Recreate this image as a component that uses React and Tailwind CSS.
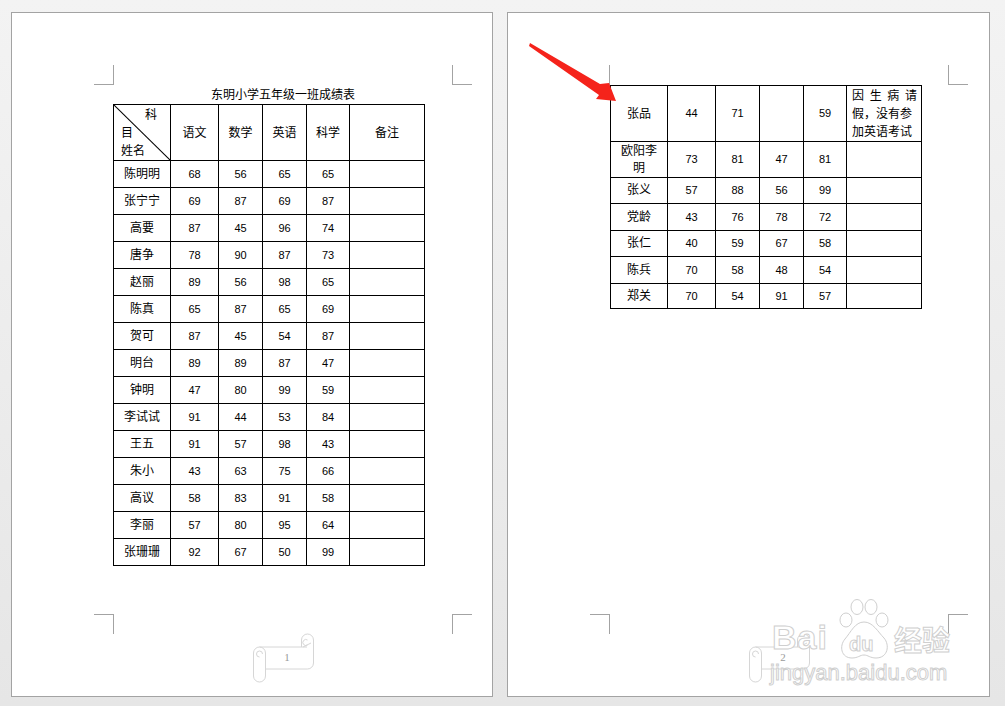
const FONT = "font-['Liberation_Sans','Noto_Sans_CJK_SC',sans-serif]"

const page1 = [
  ['陈明明', 68, 56, 65, 65],
  ['张宁宁', 69, 87, 69, 87],
  ['高要', 87, 45, 96, 74],
  ['唐争', 78, 90, 87, 73],
  ['赵丽', 89, 56, 98, 65],
  ['陈真', 65, 87, 65, 69],
  ['贺可', 87, 45, 54, 87],
  ['明台', 89, 89, 87, 47],
  ['钟明', 47, 80, 99, 59],
  ['李试试', 91, 44, 53, 84],
  ['王五', 91, 57, 98, 43],
  ['朱小', 43, 63, 75, 66],
  ['高议', 58, 83, 91, 58],
  ['李丽', 57, 80, 95, 64],
  ['张珊珊', 92, 67, 50, 99],
]

const page2 = [
  ['欧阳李明', 73, 81, 47, 81, 'h-[36px]'],
  ['张义', 57, 88, 56, 99, 'h-[26px]'],
  ['党龄', 43, 76, 78, 72, 'h-[27px]'],
  ['张仁', 40, 59, 67, 58, 'h-[26px]'],
  ['陈兵', 70, 58, 48, 54, 'h-[27px]'],
  ['郑关', 70, 54, 91, 57, 'h-[25px]'],
]

function CropMarks() {
  const c = 'absolute w-[20px] h-[20px] border-[#a3a3a3]'
  return (
    <>
      <div className={`${c} left-[82px] top-[52px] border-r border-b`} />
      <div className={`${c} left-[440px] top-[52px] border-l border-b`} />
      <div className={`${c} left-[82px] top-[601px] border-r border-t`} />
      <div className={`${c} left-[440px] top-[601px] border-l border-t`} />
    </>
  )
}

function PageNo({ n }) {
  return (
    <div className="absolute left-[241px] top-[620px] w-[62px] h-[50px]">
      <svg width="62" height="50" viewBox="0 0 62 50" fill="none" stroke="#d6d6d6" strokeWidth="1">
        <path d="M0.5 20 a6 6 0 0 1 12 0 V43 a6 6 0 0 1 -12 0 Z" />
        <path d="M6.5 24 a3 3 0 1 1 3 -3" />
        <path d="M6.5 14 H54" />
        <path d="M48.5 14 V7 a6 6 0 0 1 12 0 V30 a6 6 0 0 1 -6 6 H12.5" />
        <path d="M54.5 12 a3 3 0 1 1 0 -5" />
        <path d="M50 14 L58 10" />
      </svg>
      <div className="absolute left-[29px] top-[17px] w-[10px] text-center text-[11px] leading-[14px] text-[#9a9a9a] font-['Liberation_Serif',serif]">
        {n}
      </div>
    </div>
  )
}

function Td({ children, className = '' }) {
  return <td className={`border border-black text-center align-middle p-0 ${className}`}>{children}</td>
}

function Cols() {
  return (
    <colgroup>
      <col className="w-[57px]" />
      <col className="w-[48px]" />
      <col className="w-[44px]" />
      <col className="w-[44px]" />
      <col className="w-[43px]" />
      <col className="w-[75px]" />
    </colgroup>
  )
}

function LeftPage() {
  return (
    <div className="relative w-[482px] h-[685px] bg-white border border-[#a3a3a3] shrink-0">
      <CropMarks />
      <div className="ml-[102px] mt-[73px] w-[338px]">
        <div className="text-center text-[12px] leading-[18px] text-black">东明小学五年级一班成绩表</div>
        <table className="-ml-px w-[312px] table-fixed border-collapse text-black">
          <Cols />
          <tbody>
            <tr className="h-[55px] text-[12px]">
              <td className="relative border border-black p-0 align-top">
                <svg className="absolute inset-0 w-full h-full" preserveAspectRatio="none" viewBox="0 0 56 54">
                  <line x1="0" y1="0" x2="56" y2="54" stroke="black" strokeWidth="1" />
                </svg>
                <div className="relative leading-[18px] pt-px">
                  <div className="text-right pr-[13px]">科</div>
                  <div className="pl-[7px]">目</div>
                  <div className="pl-[7px]">姓名</div>
                </div>
              </td>
              <Td>语文</Td>
              <Td>数学</Td>
              <Td>英语</Td>
              <Td>科学</Td>
              <Td>备注</Td>
            </tr>
            {page1.map((r) => (
              <tr key={r[0]} className="h-[27px] text-[11px]">
                <Td className="text-[12px]">{r[0]}</Td>
                <Td>{r[1]}</Td>
                <Td>{r[2]}</Td>
                <Td>{r[3]}</Td>
                <Td>{r[4]}</Td>
                <Td />
              </tr>
            ))}
          </tbody>
        </table>
      </div>
      <PageNo n="1" />
    </div>
  )
}

function Watermark() {
  const stroke = "text-white [-webkit-text-stroke:1px_#cfcfcf]"
  return (
    <div className="absolute left-[262px] top-[582px] w-[200px] h-[100px] pointer-events-none">
      <div className={`absolute left-[2px] top-[24px] text-[34px] leading-[36px] font-bold font-['Liberation_Sans',sans-serif] tracking-[1px] ${stroke}`}>
        Bai
      </div>
      <svg className="absolute left-[68px] top-[0px]" width="56" height="66" viewBox="0 0 56 66" fill="white" stroke="#cfcfcf" strokeWidth="1">
        <ellipse cx="8" cy="25" rx="6" ry="7" />
        <ellipse cx="19" cy="12" rx="6" ry="7.5" />
        <ellipse cx="33" cy="12" rx="6" ry="7.5" />
        <ellipse cx="44" cy="25" rx="6" ry="7" />
        <path d="M26 27 C35 27 40 37 46 43 C52 50 50 63 38 63 C32 63 30 60 26 60 C22 60 20 63 14 63 C3 63 1 51 7 44 C13 37 17 27 26 27 Z" />
      </svg>
      <div className={`absolute left-[79px] top-[38px] text-[20px] leading-[22px] font-bold font-['Liberation_Sans',sans-serif] ${stroke}`}>
        du
      </div>
      <div className={`absolute left-[124px] top-[29px] text-[28px] leading-[30px] font-bold font-['Noto_Sans_CJK_SC',sans-serif] ${stroke}`}>
        经验
      </div>
      <div className={`absolute left-[0px] top-[66px] text-[22px] leading-[24px] font-['Liberation_Sans',sans-serif] ${stroke}`}>
        jingyan.baidu.com
      </div>
    </div>
  )
}

function RightPage() {
  return (
    <div className="relative w-[483px] h-[685px] bg-white border border-[#a3a3a3] shrink-0">
      <CropMarks />
      <div className="ml-[102px] mt-[72px] w-[338px]">
        <table className="w-[311px] table-fixed border-collapse text-black">
          <Cols />
          <tbody>
            <tr className="h-[56px] text-[11px]">
              <Td className="text-[12px]">张品</Td>
              <Td>44</Td>
              <Td>71</Td>
              <Td />
              <Td>59</Td>
              <td className="border border-black p-0 pl-[5px] pr-[4px] align-middle text-[12px] leading-[18px]">
                <div className="flex justify-between">
                  <span>因</span><span>生</span><span>病</span><span>请</span>
                </div>
                <div>假，没有参</div>
                <div>加英语考试</div>
              </td>
            </tr>
            {page2.map((r) => (
              <tr key={r[0]} className={`${r[5]} text-[11px]`}>
                <Td className="text-[12px] leading-[17px] px-[7px]">{r[0]}</Td>
                <Td>{r[1]}</Td>
                <Td>{r[2]}</Td>
                <Td>{r[3]}</Td>
                <Td>{r[4]}</Td>
                <Td />
              </tr>
            ))}
          </tbody>
        </table>
      </div>
      <PageNo n="2" />
      <Watermark />
    </div>
  )
}

export default function App() {
  return (
    <div className={`relative w-[1005px] h-[706px] overflow-hidden bg-linear-to-b from-[#f3f3f3] to-[#e6e6e6] ${FONT}`}>
      <div className="flex gap-[14px] pl-[11px] pt-[12px]">
        <LeftPage />
        <RightPage />
      </div>
      <svg className="absolute left-0 top-0 pointer-events-none" width="1005" height="706">
        <polygon points="530,43 600,84 609,83 616,101 596,99 599,95 529,46" fill="#f5231b" />
      </svg>
    </div>
  )
}
